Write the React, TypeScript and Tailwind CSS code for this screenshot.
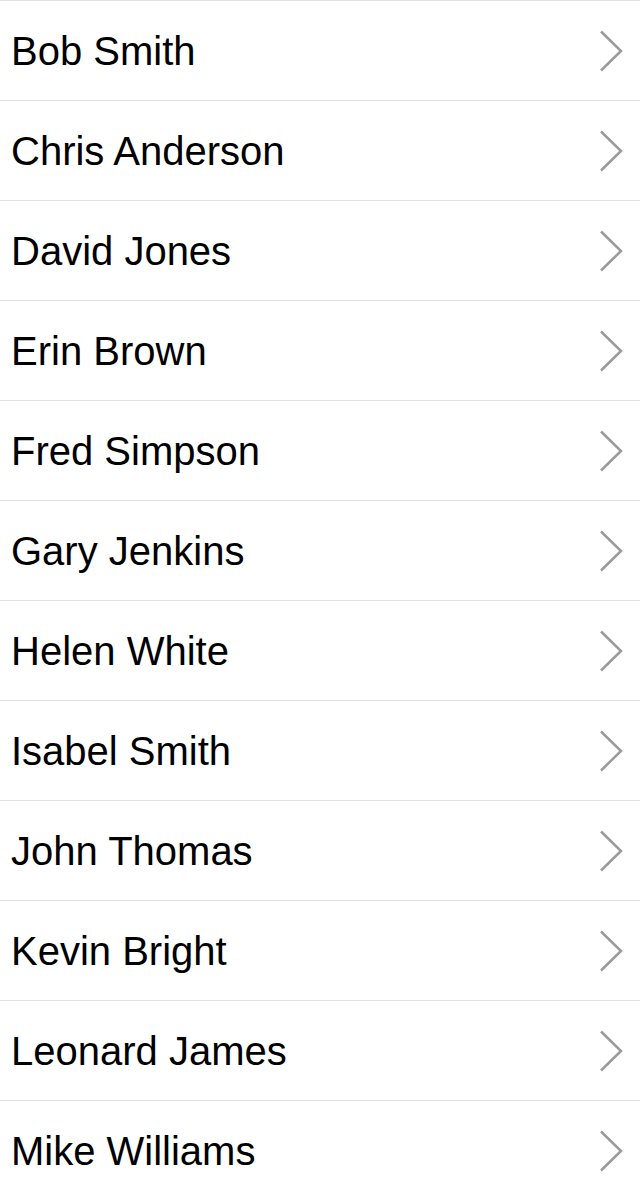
import React from "react";

const names = [
  "Bob Smith",
  "Chris Anderson",
  "David Jones",
  "Erin Brown",
  "Fred Simpson",
  "Gary Jenkins",
  "Helen White",
  "Isabel Smith",
  "John Thomas",
  "Kevin Bright",
  "Leonard James",
  "Mike Williams",
];

function Chevron() {
  return (
    <svg width="24" height="42" viewBox="0 0 24 42" className="shrink-0">
      <polyline
        points="2,1.5 22,21 2,40.5"
        fill="none"
        stroke="#9a9a9a"
        strokeWidth="2.5"
      />
    </svg>
  );
}

export default function App() {
  return (
    <div
      className="w-[640px] bg-white border-t border-[#e2e2e2]"
      style={{ fontFamily: '"Liberation Sans", Arial, sans-serif' }}
    >
      {names.map((n) => (
        <div
          key={n}
          className="h-[100px] flex items-center justify-between pl-[11px] pr-[17px] border-b border-[#e2e2e2]"
        >
          <span className="text-[40px] leading-none text-black">{n}</span>
          <Chevron />
        </div>
      ))}
    </div>
  );
}
